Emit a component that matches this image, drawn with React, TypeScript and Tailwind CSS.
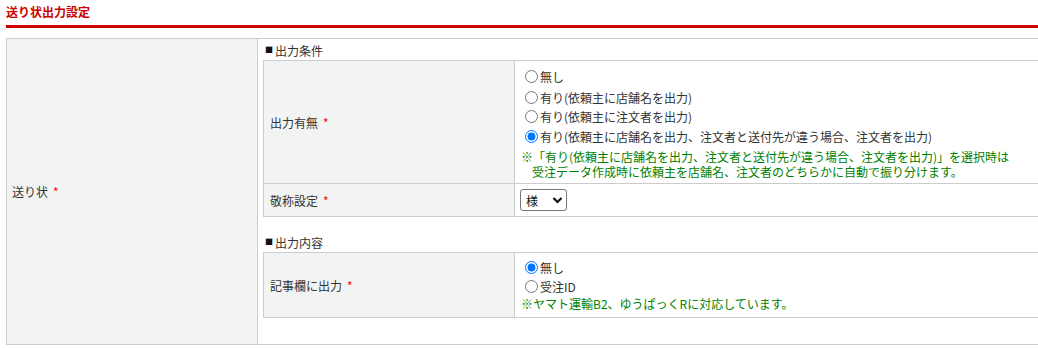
import type { ReactNode } from "react";

function Req() {
  return <span className="ml-[5px] text-[#ff0000]">*</span>;
}

function Heading({ children, className = "" }: { children: ReactNode; className?: string }) {
  return (
    <div className={`flex h-[20px] items-center pl-[2px] ${className}`}>
      <span className="mr-[2px] text-[8px] leading-[8px] text-[#111]">■</span>
      <span>{children}</span>
    </div>
  );
}

interface RowProps {
  label: string;
  children: ReactNode;
  last?: boolean;
  valueClass?: string;
}

function Row({ label, children, last = false, valueClass = "" }: RowProps) {
  return (
    <div className={`flex ${last ? "" : "border-b border-[#ccc]"}`}>
      <div className="flex w-[251px] shrink-0 items-center border-r border-[#ccc] bg-[#f2f3f3] pl-[6px]">
        {label}
        <Req />
      </div>
      <div className={`flex-1 pl-[6px] ${valueClass}`}>{children}</div>
    </div>
  );
}

interface RadioProps {
  name: string;
  label: string;
  checked?: boolean;
  className?: string;
}

function Radio({ name, label, checked = false, className = "" }: RadioProps) {
  return (
    <label className={`flex h-[19px] items-center ${className}`}>
      <input
        type="radio"
        name={name}
        defaultChecked={checked}
        className="m-0 ml-[4px] mr-[2px] h-[13px] w-[13px]"
      />
      <span>{label}</span>
    </label>
  );
}

export default function App() {
  return (
    <div className="h-[348px] w-full overflow-hidden bg-white font-['Noto_Sans_CJK_JP','Noto_Sans',sans-serif] text-[12px] leading-[19px] text-[#333]">
      <div className="pl-[6px]">
        <h2 className="pt-[3px] text-[12px] font-bold leading-[18px] text-[#cc0000]">送り状出力設定</h2>
        <div className="mt-[4px] h-[3px] w-[1040px] bg-[#cc0000]" />

        <div className="mt-[10px] flex w-[1080px] border border-[#ccc]">
          <div className="flex w-[251px] shrink-0 items-center border-r border-[#ccc] bg-[#f2f3f3] pl-[5px]">
            送り状
            <Req />
          </div>

          <div className="flex-1 pb-[26px] pl-[5px] pt-[1px]">
            <Heading>出力条件</Heading>
            <div className="border border-[#ccc]">
              <Row label="出力有無" valueClass="pt-[6px] pb-[4px]">
                <Radio name="output" label="無し" />
                <Radio name="output" label="有り(依頼主に店舗名を出力)" className="mt-[2px]" />
                <Radio name="output" label="有り(依頼主に注文者を出力)" />
                <Radio
                  name="output"
                  label="有り(依頼主に店舗名を出力、注文者と送付先が違う場合、注文者を出力)"
                  checked
                  className="mt-[1px]"
                />
                <div className="mt-[3px] leading-[15px] text-[#008000]">
                  <div>※「有り(依頼主に店舗名を出力、注文者と送付先が違う場合、注文者を出力)」を選択時は</div>
                  <div className="pl-[11px]">受注データ作成時に依頼主を店舗名、注文者のどちらかに自動で振り分けます。</div>
                </div>
              </Row>
              <Row label="敬称設定" last valueClass="flex h-[32px] items-center !pl-[5px]">
                <div className="flex h-[22px] w-[47px] items-center justify-between rounded-[3px] border border-[#767676] bg-white pl-[5px] pr-[3px] text-[#111]">
                  <span>様</span>
                  <svg width="11" height="8" viewBox="0 0 11 8" fill="none">
                    <path d="M1.5 2 L5.5 6 L9.5 2" stroke="#111" strokeWidth="2.2" />
                  </svg>
                </div>
              </Row>
            </div>

            <Heading className="mt-[15px]">出力内容</Heading>
            <div className="border border-[#ccc]">
              <Row label="記事欄に出力" last valueClass="pt-[5px] pb-[6px]">
                <Radio name="memo" label="無し" checked />
                <Radio name="memo" label="受注ID" />
                <div className="leading-[15px] text-[#008000]">※ヤマト運輸B2、ゆうぱっくRに対応しています。</div>
              </Row>
            </div>
          </div>
        </div>
      </div>
    </div>
  );
}
